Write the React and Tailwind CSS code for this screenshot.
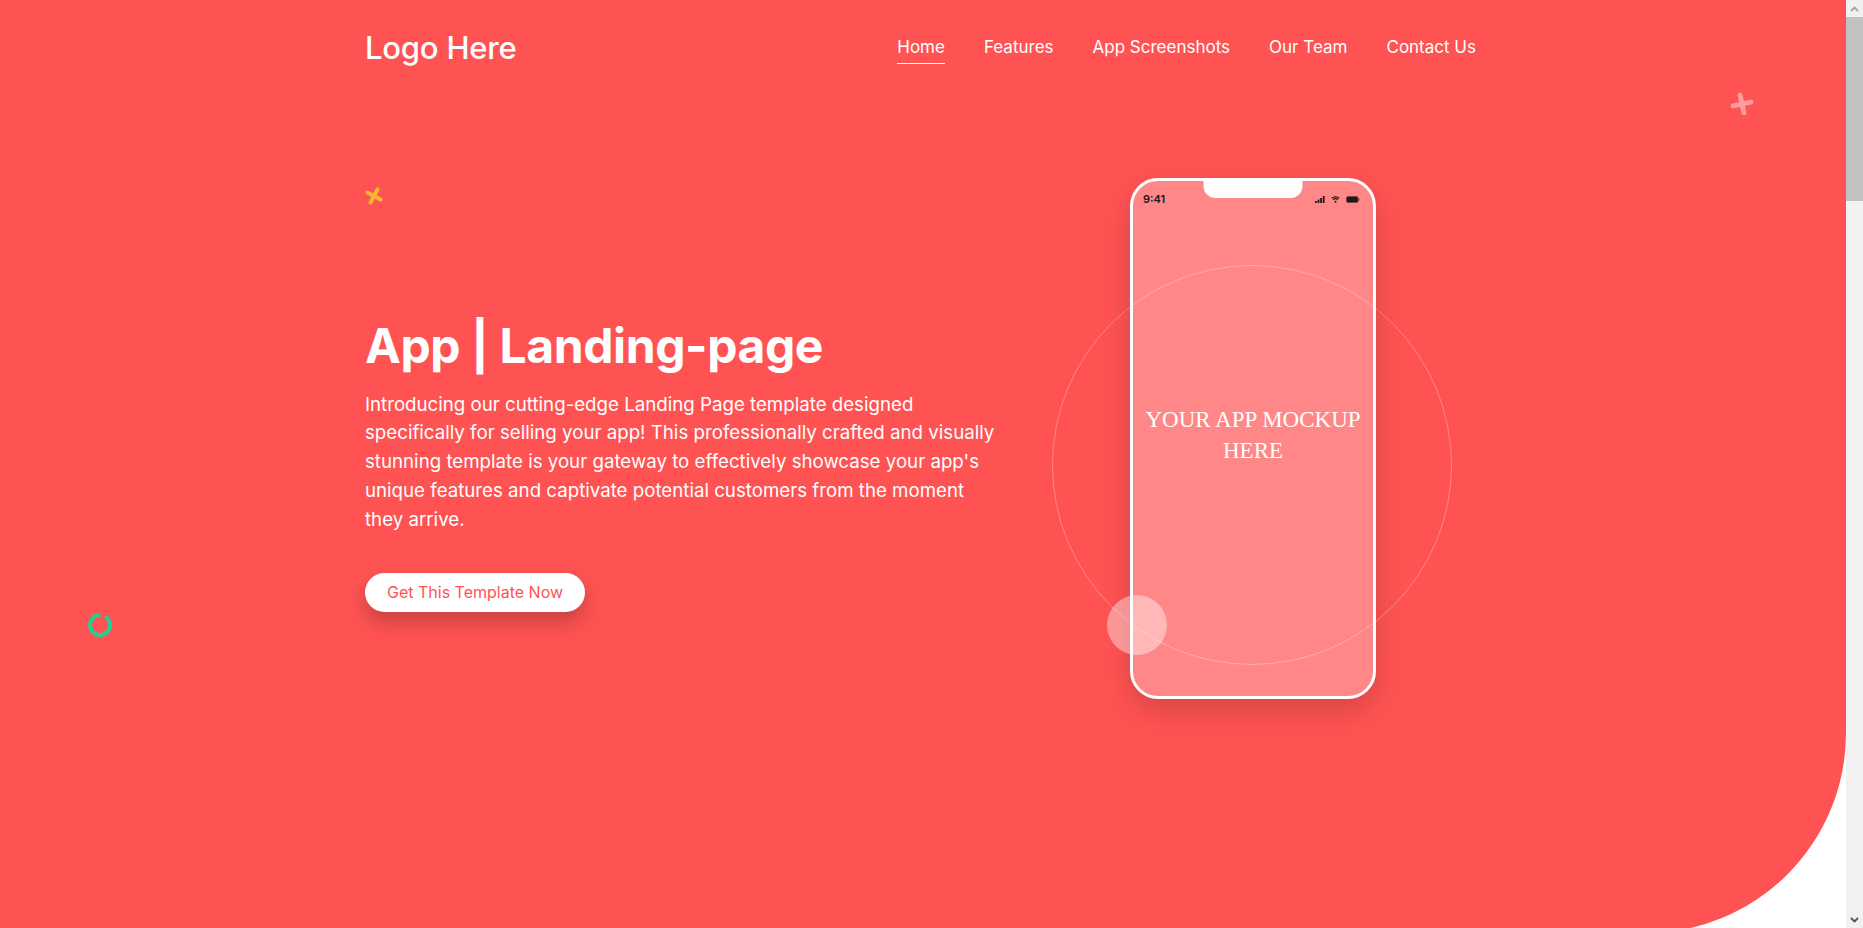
export default function App() {
  const nav = ["Home", "Features", "App Screenshots", "Our Team", "Contact Us"];
  return (
    <div className="flex h-[928px] w-full overflow-hidden bg-white font-[family-name:Inter,sans-serif]">
      <div className="relative min-w-0 flex-1">
        <section className="relative h-[933px] rounded-br-[200px] bg-[#ff5353]">
          {/* decorations */}
          <svg className="absolute left-[364px] top-[186px]" width="20" height="20" viewBox="0 0 20 20">
            <g transform="rotate(28 10 10)" stroke="#f7b731" strokeWidth="4" strokeLinecap="round">
              <line x1="10" y1="2.5" x2="10" y2="17.5" />
              <line x1="2.5" y1="10" x2="17.5" y2="10" />
            </g>
          </svg>
          <svg className="absolute left-[1729px] top-[91px]" width="26" height="26" viewBox="0 0 26 26">
            <g transform="rotate(-12 13 13)" stroke="#ff9c9c" strokeWidth="5" strokeLinecap="round">
              <line x1="13" y1="4" x2="13" y2="22" />
              <line x1="4" y1="13" x2="22" y2="13" />
            </g>
          </svg>
          <svg className="absolute left-[87px] top-[612px]" width="26" height="26" viewBox="0 0 26 26">
            <circle cx="13" cy="13" r="10" fill="none" stroke="#20cf94" strokeWidth="4" strokeDasharray="57.6 5.2" transform="rotate(-60 13 13)" />
          </svg>

          <header className="mx-auto flex h-[92px] w-[1140px] items-center justify-between px-3">
            <div className="pt-[2px] text-[31px] font-medium leading-none tracking-[-0.2px] text-white">Logo Here</div>
            <nav className="flex items-center gap-[39px] pr-[5px] pt-[6px]">
              {nav.map((n, i) => (
                <a
                  key={n}
                  className={
                    i === 0
                      ? "border-b border-white pb-[4px] text-[17px] leading-[24px] text-white"
                      : "border-b border-transparent pb-[4px] text-[17px] leading-[24px] text-white"
                  }
                >
                  {n}
                </a>
              ))}
            </nav>
          </header>

          <div className="mx-auto flex w-[1140px]">
            <div className="w-[665px] px-3 pt-[225px]">
              <h1 className="text-[48px] font-bold leading-[1.2] tracking-[-0.4px] text-white">App | Landing-page</h1>
              <p className="mt-[16px] text-[18.7px] leading-[28.8px] text-white">
                Introducing our cutting-edge Landing Page template designed
                <br />
                specifically for selling your app! This professionally crafted and visually
                <br />
                stunning template is your gateway to effectively showcase your app's
                <br />
                unique features and captivate potential customers from the moment
                <br />
                they arrive.
              </p>
              <button className="mt-[38px] rounded-full bg-white px-[22px] py-[9px] text-[16px] leading-[21px] text-[#ff5353] shadow-[0_10px_20px_rgba(0,0,0,0.22)]">
                Get This Template Now
              </button>
            </div>
            <div className="flex flex-1 justify-center px-3 pt-[86px]">
              <div className="relative mr-[5px] h-[521px] w-[246px]">
                <div className="absolute left-[-78px] top-[87px] h-[400px] w-[400px] rounded-full border border-white/30" />
                <div className="relative flex h-full w-full flex-col rounded-[28px] border-[3px] border-white bg-white/30 shadow-[0_12px_30px_rgba(0,0,0,0.16)]">
                  <div className="absolute left-1/2 top-[-3px] h-[20px] w-[99px] -translate-x-1/2 rounded-b-[12px] bg-white" />
                  <div className="mt-[12px] flex h-[13px] items-center justify-between pl-[10px] pr-[13px]">
                    <span className="text-[11px] font-semibold leading-none text-[#1a1a1a]">9:41</span>
                    <div className="flex items-center gap-[6px]">
                      <svg width="10" height="7" viewBox="0 0 10 7">
                        <rect x="0" y="5" width="1.8" height="2" fill="#1a1a1a" />
                        <rect x="2.6" y="3.6" width="1.8" height="3.4" fill="#1a1a1a" />
                        <rect x="5.2" y="2" width="1.8" height="5" fill="#1a1a1a" />
                        <rect x="7.8" y="0" width="1.8" height="7" fill="#1a1a1a" />
                      </svg>
                      <svg width="9" height="7" viewBox="0 0 9 7">
                        <path d="M0.6 2.4 A5.5 5.5 0 0 1 8.4 2.4" stroke="#1a1a1a" strokeWidth="1.2" fill="none" />
                        <path d="M2.1 3.9 A3.4 3.4 0 0 1 6.9 3.9" stroke="#1a1a1a" strokeWidth="1.2" fill="none" />
                        <circle cx="4.5" cy="5.8" r="1" fill="#1a1a1a" />
                      </svg>
                      <svg width="14" height="7" viewBox="0 0 14 7">
                        <rect x="0.5" y="0.5" width="11.5" height="6" rx="1.5" fill="#1a1a1a" stroke="#6b3a3a" strokeWidth="0.6" />
                        <rect x="12.4" y="2.3" width="1.2" height="2.4" rx="0.5" fill="#6b3a3a" />
                      </svg>
                    </div>
                  </div>
                  <div className="mt-[198px] px-2 text-center font-[family-name:'Liberation_Serif',serif] text-[23px] leading-[31px] text-white">
                    YOUR APP MOCKUP
                    <br />
                    HERE
                  </div>
                </div>
                <div className="absolute left-[-23px] top-[417px] h-[60px] w-[60px] rounded-full bg-white/40" />
              </div>
            </div>
          </div>
        </section>
      </div>
      <div className="flex w-[17px] flex-col bg-[#f1f1f1]">
        <div className="flex h-[17px] items-center justify-center">
          <svg width="9" height="6" viewBox="0 0 9 6">
            <path d="M1 5 L4.5 1.5 L8 5" stroke="#a3a3a3" strokeWidth="1.8" fill="none" />
          </svg>
        </div>
        <div className="h-[184px] bg-[#c1c1c1]" />
        <div className="flex-1" />
        <div className="flex h-[17px] items-center justify-center">
          <svg width="9" height="6" viewBox="0 0 9 6">
            <path d="M1 1 L4.5 4.5 L8 1" stroke="#505050" strokeWidth="1.8" fill="none" />
          </svg>
        </div>
      </div>
    </div>
  );
}
